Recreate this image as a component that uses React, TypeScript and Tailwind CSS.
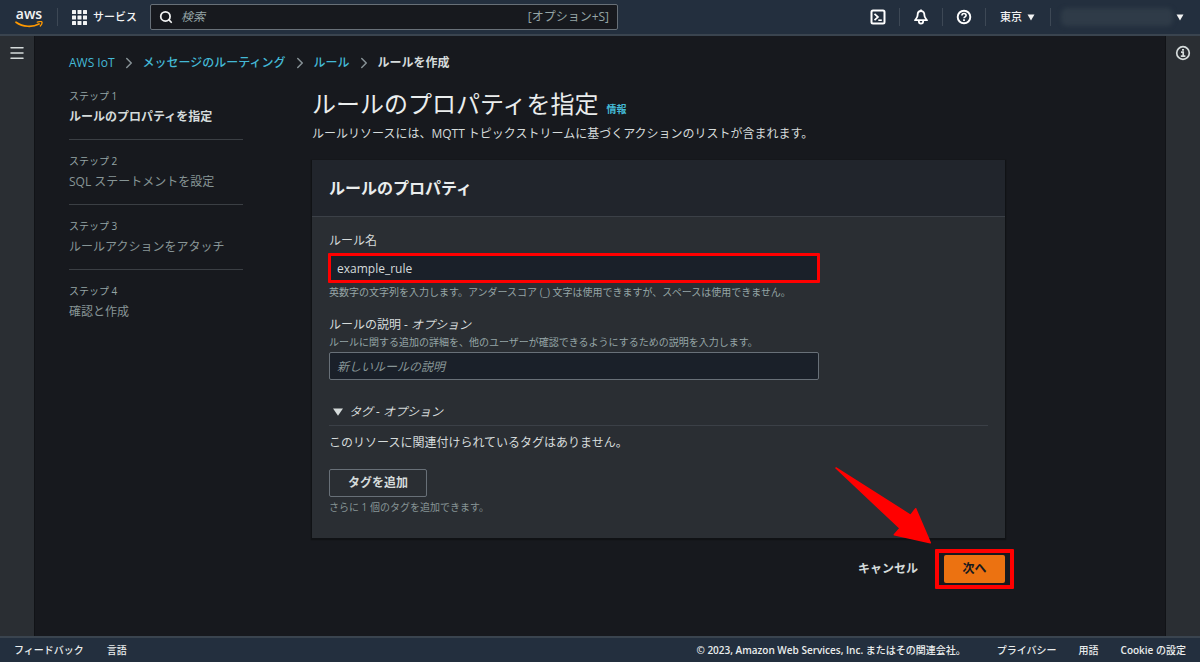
import type { ReactNode } from 'react'
import { ChevronRight, Menu, Search } from 'lucide-react'

const steps = [
  'ルールのプロパティを指定',
  'SQL ステートメントを設定',
  'ルールアクションをアタッチ',
  '確認と作成',
]

const crumbs = ['AWS IoT', 'メッセージのルーティング', 'ルール']

function AwsLogo() {
  return (
    <span className="flex w-7 flex-col items-center" aria-label="AWS">
      <span className="text-[14px] leading-[14px] font-semibold">aws</span>
      <svg width="28" height="7" viewBox="0 0 28 7" fill="none" stroke="#f90" strokeLinecap="round">
        <path d="M1 1.200C8 6.200 17.500 6.400 24 3" strokeWidth="1.700" />
        <path d="M22.300 1.200C24.500 0.400 26.600 0.600 26.900 1C27.200 1.600 26.500 3.800 25.300 5" strokeWidth="1.300" />
      </svg>
    </span>
  )
}

function TerminalIcon() {
  return (
    <svg width="16" height="16" viewBox="0 0 16 16" fill="none" stroke="currentColor" strokeWidth="2">
      <rect x="1.500" y="1.500" width="13" height="13" rx="1.500" />
      <path d="M4.500 4.800L8 8L4.500 11.200" strokeWidth="1.700" />
      <path d="M8.300 11.200H11.800" strokeWidth="1.600" />
    </svg>
  )
}

function BellIcon() {
  return (
    <svg width="16" height="16" viewBox="0 0 16 16" fill="none" stroke="currentColor" strokeWidth="1.800" strokeLinejoin="round">
      <path d="M8 2C5.500 2 4.600 4 4.600 6.200C4.600 8.600 3.300 9.400 2 11.200H14C12.700 9.400 11.400 8.600 11.400 6.200C11.400 4 10.500 2 8 2Z" />
      <path d="M5.800 12C5.800 13.600 6.800 14.600 8 14.600S10.200 13.600 10.200 12" />
      <path d="M8 0.500V2" />
    </svg>
  )
}

function HelpIcon() {
  return (
    <svg width="16" height="16" viewBox="0 0 16 16" fill="none" stroke="currentColor" strokeWidth="1.900">
      <circle cx="8" cy="8" r="6.300" />
      <path d="M5.900 6.600C5.900 5.200 6.800 4.500 8 4.500S10.100 5.300 10.100 6.400C10.100 7.800 8 7.800 8 9.300" strokeWidth="1.600" />
      <path d="M8 10.300V12" strokeWidth="1.800" />
    </svg>
  )
}

function InfoIcon() {
  return (
    <svg width="16" height="16" viewBox="0 0 16 16" fill="none" stroke="currentColor" strokeWidth="1.700">
      <circle cx="8" cy="8" r="6.300" />
      <path d="M8 3.900V5.700" strokeWidth="2" />
      <path d="M6 7.200H8.200V11M5.800 11.200H10.400" />
    </svg>
  )
}

function Caret() {
  return (
    <svg width="8" height="7" viewBox="0 0 8 7" fill="currentColor" className="shrink-0">
      <path d="M0.500 0.500h7L4 6.500z" />
    </svg>
  )
}

function Divider() {
  return <span className="h-[18px] w-px shrink-0 bg-[#3d4855]" />
}

function IconButton({ label, children }: { label: string; children: ReactNode }) {
  return (
    <button type="button" aria-label={label} className="flex w-[42px] shrink-0 items-center justify-center text-white">
      {children}
    </button>
  )
}

function Header() {
  return (
    <header className="flex h-9 shrink-0 items-center border-b-2 border-[#3a444f] bg-[#232f3e] text-[10px] font-medium text-[#f2f3f3]">
      <a href="#" className="ml-[15px] shrink-0"><AwsLogo /></a>
      <span className="mr-[14px] ml-[14px] flex"><Divider /></span>
      <button type="button" className="flex shrink-0 items-center gap-[6px] text-[11px]">
        <svg width="15" height="15" viewBox="0 0 15 15" fill="currentColor">
          {[0, 5.5, 11].map((y) => [0, 5.5, 11].map((x) => (
            <rect key={`${x}-${y}`} x={x} y={y} width="4" height="4" rx="0.5" />
          )))}
        </svg>
        サービス
      </button>
      <label className="ml-[13px] flex h-[26px] w-[468px] items-center rounded-[2px] border border-[#687078] bg-[#17191e] px-2">
        <Search size={14} strokeWidth={3} className="shrink-0" />
        <input
          type="search"
          aria-label="検索"
          placeholder="検索"
          className="ml-2 min-w-0 flex-1 bg-transparent text-[12px] font-normal outline-none placeholder:text-[#95a5a6] placeholder:italic"
        />
        <span className="text-[12px] font-normal text-[#95a5a6]">[オプション+S]</span>
      </label>
      <div className="ml-auto flex items-center">
        <IconButton label="CloudShell"><TerminalIcon /></IconButton>
        <Divider />
        <IconButton label="通知"><BellIcon /></IconButton>
        <Divider />
        <IconButton label="サポート"><HelpIcon /></IconButton>
        <Divider />
        <button type="button" className="mr-[15px] ml-[14px] flex items-center gap-[5px] text-[11px]">
          東京
          <Caret />
        </button>
        <Divider />
        <button type="button" aria-label="アカウント" className="mr-4 ml-[10px] flex items-center gap-[3px]">
          <span className="h-[18px] w-[112px] rounded-md bg-[#2f3b48] blur-[2px]" />
          <Caret />
        </button>
      </div>
    </header>
  )
}

function Breadcrumbs() {
  return (
    <nav className="mt-[18px] flex items-center text-[12px] leading-[18px]">
      {crumbs.map((crumb) => (
        <span key={crumb} className="flex items-center">
          <a href="#" className="font-medium text-[#44b9d6]">{crumb}</a>
          <ChevronRight size={18} strokeWidth={2} className="mx-[5px] text-[#879196]" />
        </span>
      ))}
      <span className="font-semibold text-[#d5dbdb]">ルールを作成</span>
    </nav>
  )
}

function Steps() {
  return (
    <ol className="w-[174px] shrink-0">
      {steps.map((step, i) => (
        <li key={step} className="mb-[13px] border-b border-[#3b3f44] pb-[13px] last:border-b-0">
          <div className="text-[10px] leading-4 text-[#95a5a6]">ステップ {i + 1}</div>
          <div className={i === 0 ? 'mt-1 text-[12px] leading-[18px] font-bold text-[#d5dbdb]' : 'mt-1 text-[12px] leading-[18px] text-[#879596]'}>
            {step}
          </div>
        </li>
      ))}
    </ol>
  )
}

function PropertiesCard() {
  return (
    <section className="mt-[17px] bg-[#2a2e33] text-[12px] leading-[18px] text-[#d5dbdb] shadow-[0_1px_1px_1px_#101215]">
      <h2 className="flex h-[57px] items-center border-b border-[#3b4047] bg-[#21252c] px-[17px] text-[16px] font-bold text-[#eaeded]">
        ルールのプロパティ
      </h2>
      <div className="px-[17px] pt-[15px] pb-[23px]">
        <label htmlFor="rule-name" className="block">ルール名</label>
        <div className="relative mt-1 max-w-[490px]">
          <input
            id="rule-name"
            defaultValue="example_rule"
            className="block h-7 w-full bg-[#1a2029] px-2 font-medium outline-none"
          />
          <span className="pointer-events-none absolute -inset-px rounded-[1px] border-[3px] border-[#f00]" />
        </div>
        <p className="mt-[2px] text-[10px] leading-4 text-[#95a5a6]">
          英数字の文字列を入力します。アンダースコア (_) 文字は使用できますが、スペースは使用できません。
        </p>

        <label htmlFor="rule-desc" className="mt-4 block">ルールの説明 - <i>オプション</i></label>
        <p className="text-[10px] leading-4 text-[#95a5a6]">
          ルールに関する追加の詳細を、他のユーザーが確認できるようにするための説明を入力します。
        </p>
        <input
          id="rule-desc"
          placeholder="新しいルールの説明"
          className="mt-[2px] block h-7 w-full max-w-[490px] rounded-[2px] border border-[#687078] bg-[#1a2029] px-[7px] outline-none placeholder:text-[#879596] placeholder:italic"
        />

        <div className="mt-[23px] border-b border-[#3b4047] pb-1">
          <button type="button" className="flex items-center gap-[6px] pl-1 italic">
            <svg width="10" height="8" viewBox="0 0 10 8" fill="currentColor"><path d="M0 0.500h10L5 7.800z" /></svg>
            タグ - オプション
          </button>
        </div>
        <p className="mt-2">このリソースに関連付けられているタグはありません。</p>
        <button type="button" className="mt-[17px] block h-7 rounded-[2px] border border-[#687078] px-[18px] font-bold">
          タグを追加
        </button>
        <p className="mt-[2px] text-[10px] leading-4 text-[#879596]">さらに 1 個のタグを追加できます。</p>
      </div>
    </section>
  )
}

function Actions() {
  return (
    <div className="relative mt-[17px] flex items-center justify-end gap-[26px] text-[12px] font-bold">
      <button type="button" className="text-[#d5dbdb]">キャンセル</button>
      <div className="relative">
        <button type="button" className="block h-7 w-[61px] rounded-[2px] bg-[#ec7211] text-[#16191f]">次へ</button>
        <span className="pointer-events-none absolute -inset-x-[9px] -inset-y-[6px] rounded-[1px] border-4 border-[#f00]" />
      </div>
      {/* callout arrow */}
      <svg width="98" height="80" viewBox="0 0 98 80" className="pointer-events-none absolute right-[74px] bottom-[38px]">
        <path d="M3 3L77.700 50.300L82.700 43.700L97.300 77.700L61.300 69.700L67 63.300Z" fill="#f00" stroke="#f00" strokeWidth="1.500" strokeLinejoin="round" />
      </svg>
    </div>
  )
}

function Footer() {
  return (
    <footer className="flex h-[26px] shrink-0 items-center border-t-2 border-[#3a444f] bg-[#232f3e] px-[14px] text-[10px] font-medium text-[#eaeded]">
      <a href="#">フィードバック</a>
      <a href="#" className="ml-[23px]">言語</a>
      <span className="ml-auto">
        <span className="font-semibold">© 2023, Amazon Web Services, Inc.</span> またはその関連会社。
      </span>
      <a href="#" className="ml-[31px]">プライバシー</a>
      <a href="#" className="ml-[22px]">用語</a>
      <a href="#" className="ml-[22px]"><span className="font-semibold">Cookie</span> の設定</a>
    </footer>
  )
}

export default function App() {
  return (
    <div className="flex min-h-screen flex-col bg-[#17191e] font-['Open_Sans','Noto_Sans_CJK_JP',sans-serif]">
      <Header />
      <div className="flex flex-1">
        <aside className="flex w-[35px] shrink-0 justify-center border-r border-[#111317] bg-[#2a2e33] pt-2 text-[#d5dbdb]">
          <button type="button" aria-label="メニュー" className="h-[18px]"><Menu size={18} strokeWidth={2} /></button>
        </aside>
        <main className="min-w-0 flex-1 px-[34px]">
          <Breadcrumbs />
          <div className="mt-4 flex max-w-[936px] gap-[69px]">
            <Steps />
            <div className="min-w-0 flex-1">
              <div className="flex items-baseline gap-2">
                <h1 className="text-[24px] leading-8 text-[#eaeded]">ルールのプロパティを指定</h1>
                <a href="#" className="text-[10px] font-bold text-[#44b9d6]">情報</a>
              </div>
              <p className="mt-[5px] text-[12px] leading-[18px] text-[#d5dbdb]">
                ルールリソースには、MQTT トピックストリームに基づくアクションのリストが含まれます。
              </p>
              <PropertiesCard />
              <Actions />
            </div>
          </div>
        </main>
        <aside className="flex w-[35px] shrink-0 justify-center border-l border-[#111317] bg-[#2a2e33] pt-2 text-[#d5dbdb]">
          <button type="button" aria-label="情報" className="h-[18px]"><InfoIcon /></button>
        </aside>
      </div>
      <Footer />
    </div>
  )
}
